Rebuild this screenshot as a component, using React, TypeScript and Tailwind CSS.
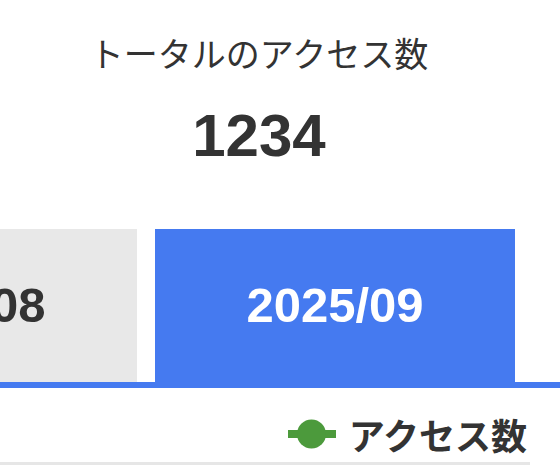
const jp = { fontFamily: '"Noto Sans CJK JP", "Noto Sans", sans-serif' };
const num = { fontFamily: '"Liberation Sans", Arial, sans-serif' };

const months = ['2025/08', '2025/09', '2025/10'];

function Tab({ label, active }: { label: string; active: boolean }) {
  return (
    <div
      className={`w-[360px] shrink-0 h-full flex items-center justify-center text-[49px] font-bold ${
        active ? 'bg-[#457af0] text-white' : label === '2025/08' ? 'bg-[#e8e8e8] text-[#333]' : 'bg-white text-[#333]'
      }`}
      style={num}
    >
      {label}
    </div>
  );
}

export default function App() {
  return (
    <div className="w-[560px] h-[474px] overflow-hidden bg-white">
      <div className="w-[518px] text-center pt-[33px] text-[#333]">
        <div className="text-[34px] leading-[40px]" style={jp}>
          トータルのアクセス数
        </div>
        <div className="mt-[33px] text-[60px] font-bold leading-[60px]" style={num}>
          1234
        </div>
      </div>

      <div className="mt-[63px] h-[153px] flex gap-[18px] ml-[-223px]">
        {months.map((m) => (
          <Tab key={m} label={m} active={m === '2025/09'} />
        ))}
      </div>
      <div className="h-[6px] bg-[#457af0]" />

      <div className="w-[530px] h-[74px] flex items-center justify-end pr-[3px] pt-[24px] pb-[6px]">
        <svg width="48" height="30" viewBox="0 0 48 30" className="shrink-0">
          <rect x="0" y="11" width="48" height="8" fill="#4c9a3c" />
          <circle cx="23.5" cy="15" r="14.5" fill="#4c9a3c" />
        </svg>
        <span className="ml-[13px] text-[36px] font-bold leading-[40px] text-[#333]" style={jp}>
          アクセス数
        </span>
      </div>
      <div className="w-[530px] h-[3px] bg-[#e6e6e6]" />
    </div>
  );
}
